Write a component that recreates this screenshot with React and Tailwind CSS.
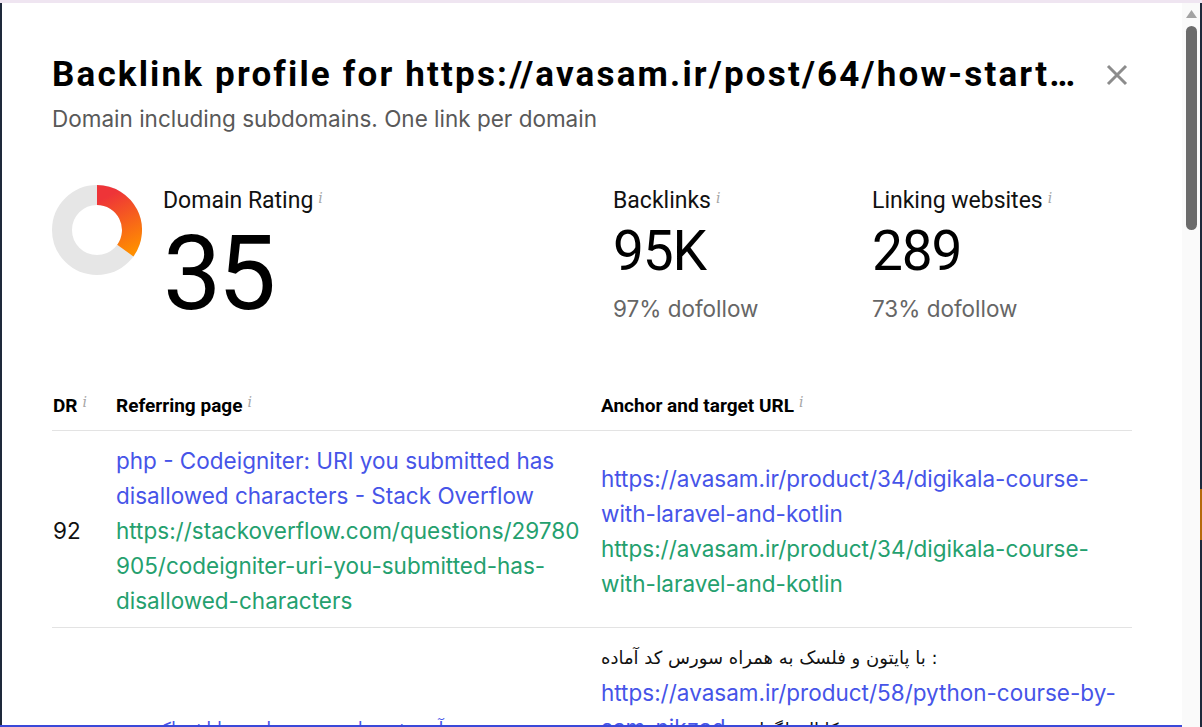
import React from 'react';

const sans = { fontFamily: 'Inter, "DejaVu Sans", sans-serif' };
const head = { fontFamily: 'Roboto, Inter, "DejaVu Sans", sans-serif' };
const fa = { fontFamily: '"DejaVu Sans", sans-serif' };

function Info() {
  return (
    <span
      className="ml-[5px] text-[14px] italic font-normal leading-none text-[#a6a6a6] relative -top-[5px]"
      style={{ fontFamily: '"DejaVu Serif", serif' }}
    >
      i
    </span>
  );
}

function Donut({ value }) {
  const r = 35;
  const a = (value / 100) * 2 * Math.PI;
  const ex = 45 + r * Math.sin(a);
  const ey = 45 - r * Math.cos(a);
  const large = value > 50 ? 1 : 0;
  return (
    <svg width="90" height="90" viewBox="0 0 90 90" className="shrink-0">
      <defs>
        <linearGradient id="dr" gradientUnits="userSpaceOnUse" x1="50" y1="14" x2="78" y2="68">
          <stop offset="0" stopColor="#ee3438" />
          <stop offset="1" stopColor="#ff8e00" />
        </linearGradient>
      </defs>
      <circle cx="45" cy="45" r={r} fill="none" stroke="#e6e6e6" strokeWidth="20" />
      <path
        d={`M45 10 A${r} ${r} 0 ${large} 1 ${ex.toFixed(2)} ${ey.toFixed(2)}`}
        fill="none"
        stroke="url(#dr)"
        strokeWidth="20"
      />
    </svg>
  );
}

function Stat({ label, value, sub, width }) {
  return (
    <div className={width}>
      <div className="text-[23px] leading-[32px] text-[#111]" style={head}>
        {label}
        <Info />
      </div>
      <div className="mt-[7px] text-[55px] leading-none text-black tracking-[-0.02em]" style={head}>
        {value}
      </div>
      <div className="mt-[16px] text-[22.5px] leading-[28px] text-[#666]" style={sans}>
        {sub}
      </div>
    </div>
  );
}

export default function App() {
  return (
    <div className="w-[1202px] h-[727px] overflow-hidden relative bg-[#1e293b] flex flex-col">
      <div className="h-[3px] bg-[#efe5f1] shrink-0" />
      <div className="flex flex-1 min-h-0">
        <div className="w-[2px] bg-[#1e293b] shrink-0" />
        <div className="flex-1 min-w-0 bg-white overflow-hidden pl-[50px] pr-[50px] pt-[52px]">
          {/* header */}
          <div className="flex items-center">
            <h1
              className="flex-1 min-w-0 truncate text-[35px] leading-[40px] font-bold text-black tracking-[0.062em]"
              style={head}
            >
              Backlink profile for https://avasam.ir/post/64/how-start-programming-with-python
            </h1>
            <button className="ml-[24px] mr-[2px] w-[26px] h-[26px] flex items-center justify-center shrink-0">
              <svg width="22" height="22" viewBox="0 0 22 22">
                <path d="M2 2L20 20M20 2L2 20" stroke="#8c8c8c" strokeWidth="3" />
              </svg>
            </button>
          </div>
          <p className="mt-[10px] text-[22.5px] leading-[28px] text-[#595959]" style={sans}>
            Domain including subdomains. One link per domain
          </p>

          {/* stats */}
          <div className="mt-[52px] flex">
            <div className="w-[561px] flex">
              <Donut value={35} />
              <div className="ml-[21px]">
                <div className="text-[23px] leading-[32px] text-[#111]" style={head}>
                  Domain Rating
                  <Info />
                </div>
                <div
                  className="mt-[5px] text-[104px] leading-none text-black tracking-[-0.035em]"
                  style={head}
                >
                  35
                </div>
              </div>
            </div>
            <Stat label="Backlinks" value="95K" sub="97% dofollow" width="w-[259px]" />
            <Stat label="Linking websites" value="289" sub="73% dofollow" width="w-[260px]" />
          </div>

          {/* table */}
          <table className="mt-[68px] w-full table-fixed border-collapse" style={sans}>
            <colgroup>
              <col className="w-[64px]" />
              <col className="w-[485px]" />
              <col />
            </colgroup>
            <thead>
              <tr className="text-left text-[19px] leading-[24px] text-black" style={head}>
                <th className="pb-[12px] font-bold pl-[1px]">
                  DR
                  <Info />
                </th>
                <th className="pb-[12px] font-bold">
                  Referring page
                  <Info />
                </th>
                <th className="pb-[12px] font-bold">
                  Anchor and target URL
                  <Info />
                </th>
              </tr>
            </thead>
            <tbody className="text-[22.5px] leading-[35px]">
              <tr className="border-t border-[#e3e3e3]">
                <td className="align-middle pl-[1px] pt-[12px] pb-[9px] text-[#111]">92</td>
                <td className="align-middle pt-[12px] pb-[9px] pr-[12px] [overflow-wrap:anywhere]">
                  <div className="text-[#4654e8]">
                    php - Codeigniter: URI you submitted has disallowed characters - Stack Overflow
                  </div>
                  <div className="text-[#24a06e]">
                    https://stackoverflow.com/questions/29780905/codeigniter-uri-you-submitted-has-disallowed-characters
                  </div>
                </td>
                <td className="align-middle pt-[12px] pb-[9px] pr-[6px]">
                  <div className="text-[#4654e8]">
                    https://avasam.ir/product/34/digikala-course-with-laravel-and-kotlin
                  </div>
                  <div className="text-[#24a06e]">
                    https://avasam.ir/product/34/digikala-course-with-laravel-and-kotlin
                  </div>
                </td>
              </tr>
              <tr className="border-t border-[#e3e3e3]">
                <td className="align-middle pl-[1px] pt-[12px] pb-[9px] text-[#111]">31</td>
                <td className="align-middle pt-[12px] pb-[9px] pr-[12px] [overflow-wrap:anywhere]">
                  <div className="text-[#4654e8] text-[18px]" style={fa}>
                    آموزش برنامه نویسی پایتون با اشتراک ویژه
                  </div>
                  <div className="text-[#24a06e]">https://avasam.ir/blog/python</div>
                </td>
                <td className="align-middle pt-[12px] pb-[9px] pr-[6px]">
                  <div className="text-[#111] text-[18px]" style={fa}>
                    با پایتون و فلسک به همراه سورس کد آماده :
                  </div>
                  <div>
                    <span className="text-[#4654e8]">
                      https://avasam.ir/product/58/python-course-by-sam-nikzad
                    </span>{' '}
                    <span className="text-[#111] text-[18px]" style={fa}>
                      • کانال تلگرام :
                    </span>
                  </div>
                  <div className="text-[#24a06e]">
                    https://avasam.ir/product/58/python-course-by-sam-nikzad
                  </div>
                  <div className="text-[#24a06e]">https://avasam.ir/</div>
                </td>
              </tr>
            </tbody>
          </table>
        </div>

        {/* scrollbar */}
        <div className="w-[18px] bg-[#fafafa] shrink-0 flex flex-col items-center pt-[7px]">
          <svg width="11" height="8" viewBox="0 0 11 8" className="ml-[1px]">
            <path d="M5.5 0L11 8H0Z" fill="#a3a3a3" />
          </svg>
          <div className="mt-[8px] ml-[1px] w-[11px] h-[204px] rounded-full bg-[#6b6b6b]" />
        </div>
        <div className="w-[2px] bg-[#1e293b] shrink-0 flex flex-col">
          <div className="h-[486px]" />
          <div className="h-[51px] bg-[#b5690a]" />
        </div>
      </div>
      <div className="absolute left-0 bottom-0 w-[1182px] h-[2px] bg-[#3a49d8]" />
    </div>
  );
}
